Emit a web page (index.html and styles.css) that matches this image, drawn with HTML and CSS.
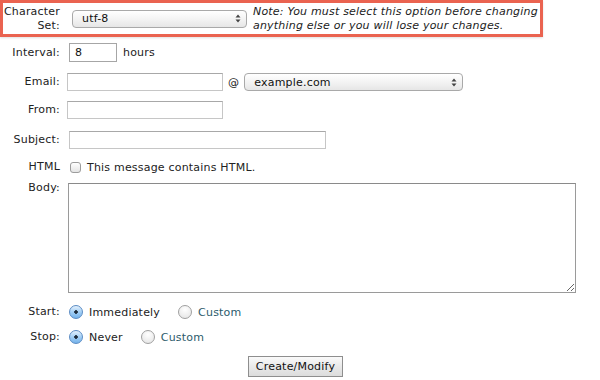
FILE: index.html
```html
<!DOCTYPE html>
<html>
<head>
<meta charset="utf-8">
<link rel="stylesheet" href="styles.css">
</head>
<body>
<form class="form">
  <div class="charset">
    <label class="lbl lbl-two">Character<br>Set:</label>
    <span class="selwrap sel-charset">
      <select class="sel"><option>utf-8</option></select>
      <svg class="arrows" width="6" height="9" viewBox="0 0 6 9"><path d="M3 0.5 L5.5 3.5 H0.5 Z M3 8.5 L5.5 5.5 H0.5 Z" fill="#444"/></svg>
    </span>
    <p class="note">Note: You must select this option before changing<br>anything else or you will lose your changes.</p>
  </div>

  <div class="row r-interval">
    <label class="lbl">Interval:</label>
    <input class="txt in-interval" type="text" value="8">
    <span class="after">hours</span>
  </div>

  <div class="row r-email">
    <label class="lbl">Email:</label>
    <input class="txt in-email" type="text">
    <span class="at">@</span>
    <span class="selwrap sel-domain">
      <select class="sel"><option>example.com</option></select>
      <svg class="arrows" width="6" height="9" viewBox="0 0 6 9"><path d="M3 0.5 L5.5 3.5 H0.5 Z M3 8.5 L5.5 5.5 H0.5 Z" fill="#444"/></svg>
    </span>
  </div>

  <div class="row r-from">
    <label class="lbl">From:</label>
    <input class="txt in-from" type="text">
  </div>

  <div class="row r-subject">
    <label class="lbl">Subject:</label>
    <input class="txt in-subject" type="text">
  </div>

  <div class="row r-html">
    <label class="lbl">HTML</label>
    <input class="chk" type="checkbox">
    <span class="opt">This message contains HTML.</span>
  </div>

  <div class="row r-body">
    <label class="lbl lbl-body">Body:</label>
    <textarea class="area"></textarea>
  </div>

  <div class="row r-start">
    <label class="lbl">Start:</label>
    <input class="rad" type="radio" name="start" checked>
    <span class="opt">Immediately</span>
    <input class="rad rad-2" type="radio" name="start">
    <span class="opt link">Custom</span>
  </div>

  <div class="row r-stop">
    <label class="lbl">Stop:</label>
    <input class="rad" type="radio" name="stop" checked>
    <span class="opt">Never</span>
    <input class="rad rad-2" type="radio" name="stop">
    <span class="opt link">Custom</span>
  </div>

  <div class="row r-submit">
    <button class="btn" type="button">Create/Modify</button>
  </div>
</form>
</body>
</html>
```

FILE: styles.css
```css
html, body {
  margin: 0;
  padding: 0;
  background: #ffffff;
}

body {
  font-family: "DejaVu Sans", Verdana, sans-serif;
  font-size: 11px;
  letter-spacing: 0.2px;
  color: #222;
}

.form {
  width: 600px;
}

.charset {
  box-sizing: border-box;
  width: 543px;
  height: 37px;
  border: 3px solid #ea6350;
  box-shadow: 0 1px 2px rgba(0,0,0,0.12);
  display: flex;
  align-items: center;
}

.lbl {
  width: 60px;
  flex: none;
  text-align: right;
  line-height: 14px;
}

.charset .lbl {
  width: 57px;
}

.lbl-two {
  line-height: 13.5px;
}

.selwrap {
  position: relative;
  display: inline-block;
  flex: none;
}

.sel {
  -webkit-appearance: none;
  appearance: none;
  box-sizing: border-box;
  height: 18px;
  margin: 0;
  padding: 0 0 0 9px;
  border: 1px solid #a9a9a9;
  border-radius: 4px;
  background: linear-gradient(#ffffff, #f1f1f1 60%, #e6e6e6);
  font-family: "DejaVu Sans", Verdana, sans-serif;
  font-size: 11px;
  letter-spacing: 0.2px;
  color: #111;
  width: 100%;
  display: block;
}

.arrows {
  position: absolute;
  right: 6px;
  top: 4.5px;
}

.sel-charset {
  width: 175px;
  margin-left: 12px;
}

.note {
  margin: 0 0 0 6px;
  font-style: italic;
  line-height: 14px;
  color: #222;
}

.row {
  display: flex;
  align-items: center;
}

.txt {
  box-sizing: border-box;
  margin: 0;
  height: 18px;
  padding: 0 6px;
  border: 1px solid #c6c6c6;
  border-top-color: #a8a8a8;
  font-family: "DejaVu Sans", Verdana, sans-serif;
  font-size: 11px;
  color: #111;
  background: #fff;
  flex: none;
}

.r-interval {
  margin-top: 6px;
  height: 19px;
}

.in-interval {
  width: 48px;
  height: 19px;
  margin-left: 9px;
  border-color: #a6a6a6;
  padding-left: 5px;
}

.after {
  margin-left: 6px;
}

.r-email {
  margin-top: 11px;
  height: 18px;
}

.in-email {
  width: 156px;
  margin-left: 7px;
}

.at {
  margin-left: 5px;
}

.sel-domain {
  width: 219px;
  margin-left: 5px;
}

.r-from {
  margin-top: 10px;
  height: 18px;
}

.in-from {
  width: 156px;
  margin-left: 7px;
}

.r-subject {
  margin-top: 12px;
  height: 18px;
}

.in-subject {
  width: 257px;
  margin-left: 9px;
}

.r-html {
  margin-top: 11px;
  height: 14px;
}

.chk {
  -webkit-appearance: none;
  appearance: none;
  box-sizing: border-box;
  width: 11px;
  height: 11px;
  margin: 0 0 0 10px;
  border: 1px solid #9c9c9c;
  border-radius: 3px;
  background: linear-gradient(#ffffff, #e4e4e4);
  flex: none;
}

.opt {
  margin-left: 6px;
}

.r-body {
  margin-top: 9px;
  height: 110px;
  align-items: flex-start;
}

.lbl-body {
  margin-top: -2px;
}

.area {
  box-sizing: border-box;
  margin: 0 0 0 8px;
  width: 508px;
  height: 110px;
  border: 1px solid #9a9a9a;
  border-top-color: #8a8a8a;
  resize: both;
  flex: none;
}

.r-start {
  margin-top: 11px;
  height: 16px;
}

.r-stop {
  margin-top: 9px;
  height: 16px;
}

.rad {
  -webkit-appearance: none;
  appearance: none;
  box-sizing: border-box;
  width: 14px;
  height: 14px;
  margin: 0 0 0 9px;
  border: 1px solid #a0a0a0;
  border-radius: 50%;
  background: radial-gradient(circle at 50% 30%, #ffffff, #e2e2e2);
  flex: none;
}

.rad:checked {
  border-color: #5b8cc4;
  background: radial-gradient(circle at 50% 50%, #1d2b3a 0, #1d2b3a 1.5px, transparent 2px),
              linear-gradient(#e4f1fd, #a3cff5 50%, #74b2ea);
}

.rad + .opt {
  margin-left: 6px;
}

.rad-2 {
  margin-left: 18px;
}

.link {
  color: #2c5b6b;
}

.r-submit {
  margin-top: 11px;
  height: 21px;
  padding-left: 248px;
}

.btn {
  box-sizing: border-box;
  width: 95px;
  height: 21px;
  margin: 0;
  padding: 0;
  border: 1px solid #8e8e8e;
  border-radius: 0;
  background: linear-gradient(#fafafa, #e9e9e9 50%, #dcdcdc);
  font-family: "DejaVu Sans", Verdana, sans-serif;
  font-size: 11px;
  letter-spacing: 0.2px;
  color: #111;
}
```
